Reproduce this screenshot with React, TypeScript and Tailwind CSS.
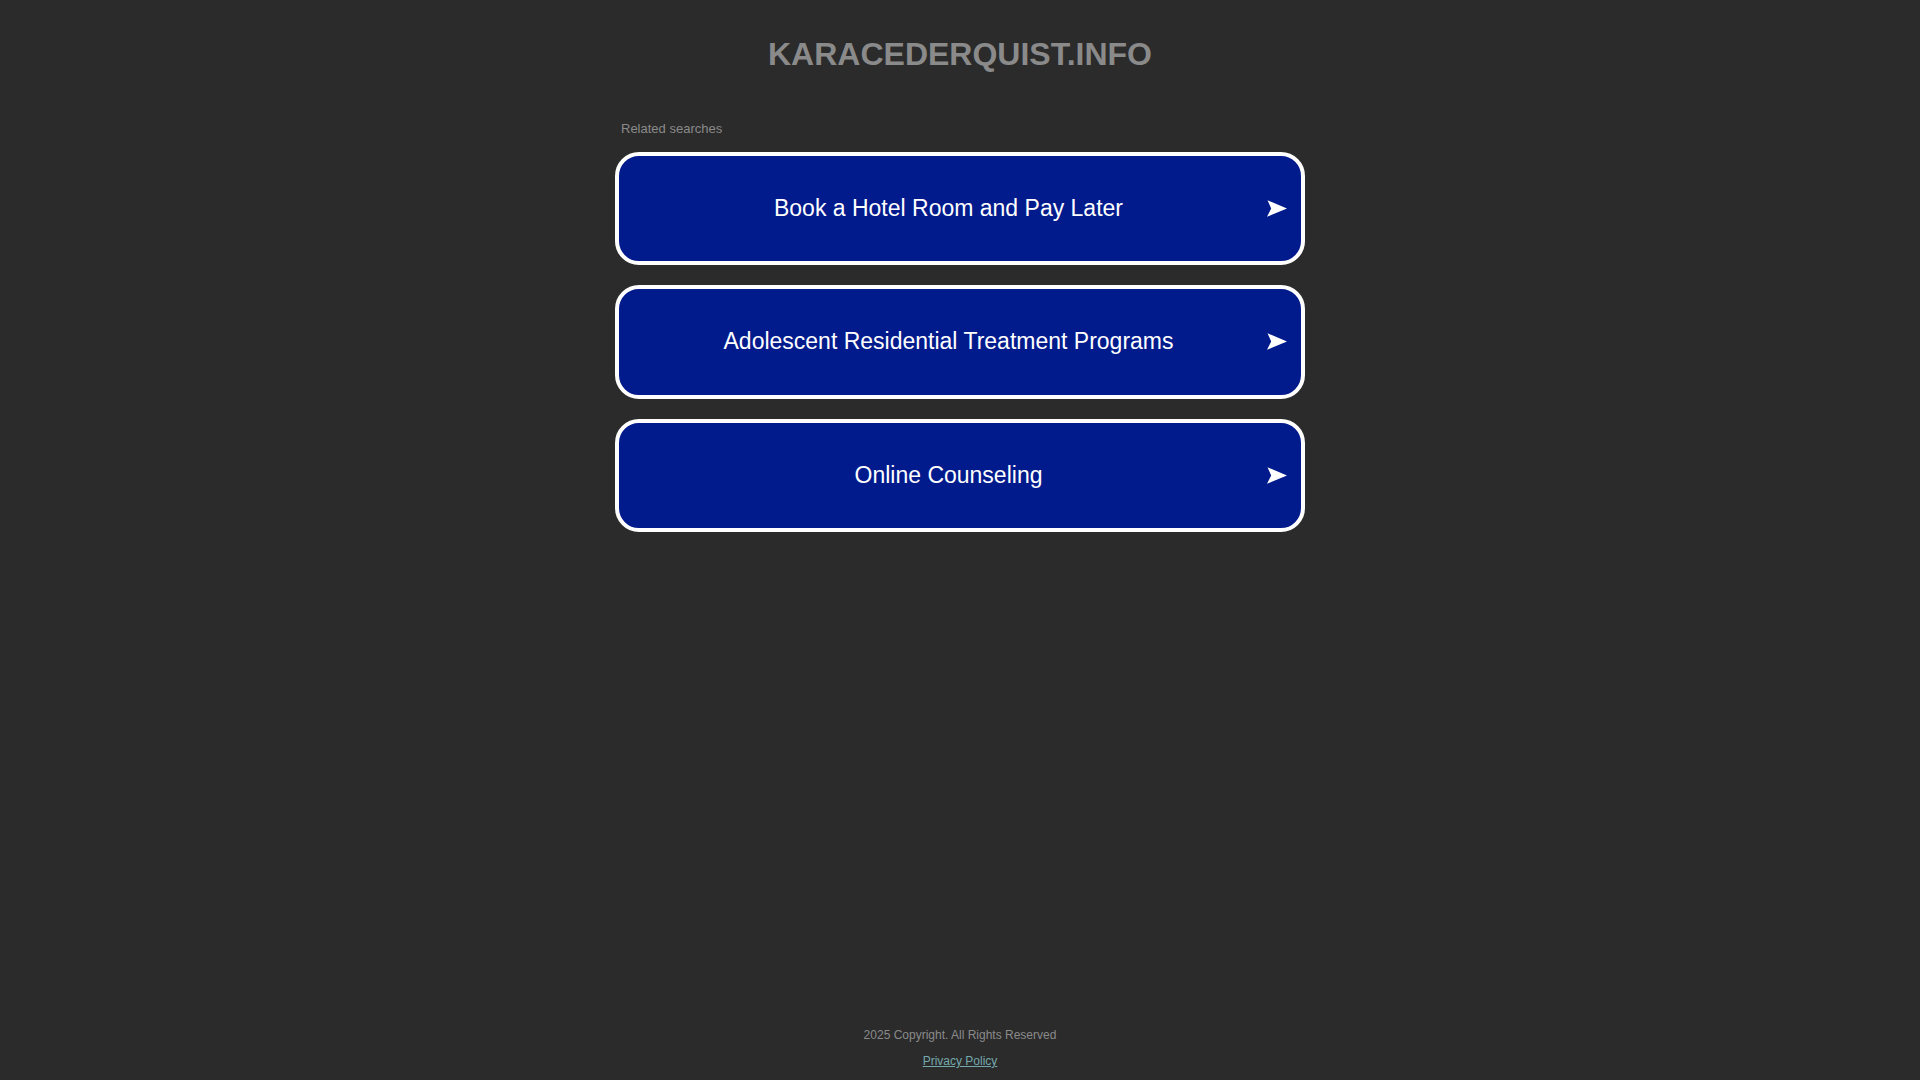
const searches = [
  "Book a Hotel Room and Pay Later",
  "Adolescent Residential Treatment Programs",
  "Online Counseling",
];

function Arrow() {
  return (
    <svg width="20" height="17" viewBox="0 0 20 17" className="shrink-0">
      <path d="M0.5 0.3 L20 8.5 L0 16.7 L4.2 8.6 Z" fill="#ffffff" />
    </svg>
  );
}

export default function App() {
  return (
    <div
      className="flex h-screen flex-col bg-[#2b2b2b]"
      style={{ fontFamily: '"Liberation Sans", Arial, sans-serif' }}
    >
      <main className="flex flex-1 flex-col items-center">
        <h1 className="mt-[36px] text-[32px] font-bold leading-[36px] text-[#8a8a8a]">
          KARACEDERQUIST.INFO
        </h1>

        <div className="mt-[49px] w-[690px]">
          <div className="pl-[6px] text-[13px] leading-[15px] text-[#8a8a8a]">
            Related searches
          </div>

          <div className="mt-[15.7px] flex flex-col gap-[20px]">
            {searches.map((s) => (
              <a
                key={s}
                href="#"
                className="flex h-[113.5px] items-center rounded-[24px] border-4 border-white bg-[#011a8c] pl-[11px] pr-[14px]"
              >
                <span className="flex-1 text-center text-[23px] leading-[27px] text-white">
                  {s}
                </span>
                <Arrow />
              </a>
            ))}
          </div>
        </div>
      </main>

      <footer className="flex flex-col items-center pb-[12px] text-[12px] leading-[14px]">
        <div className="text-[#8a8a8a]">2025 Copyright. All Rights Reserved</div>
        <a href="#" className="mt-[12px] text-[#74a9ab] underline">
          Privacy Policy
        </a>
      </footer>
    </div>
  );
}
